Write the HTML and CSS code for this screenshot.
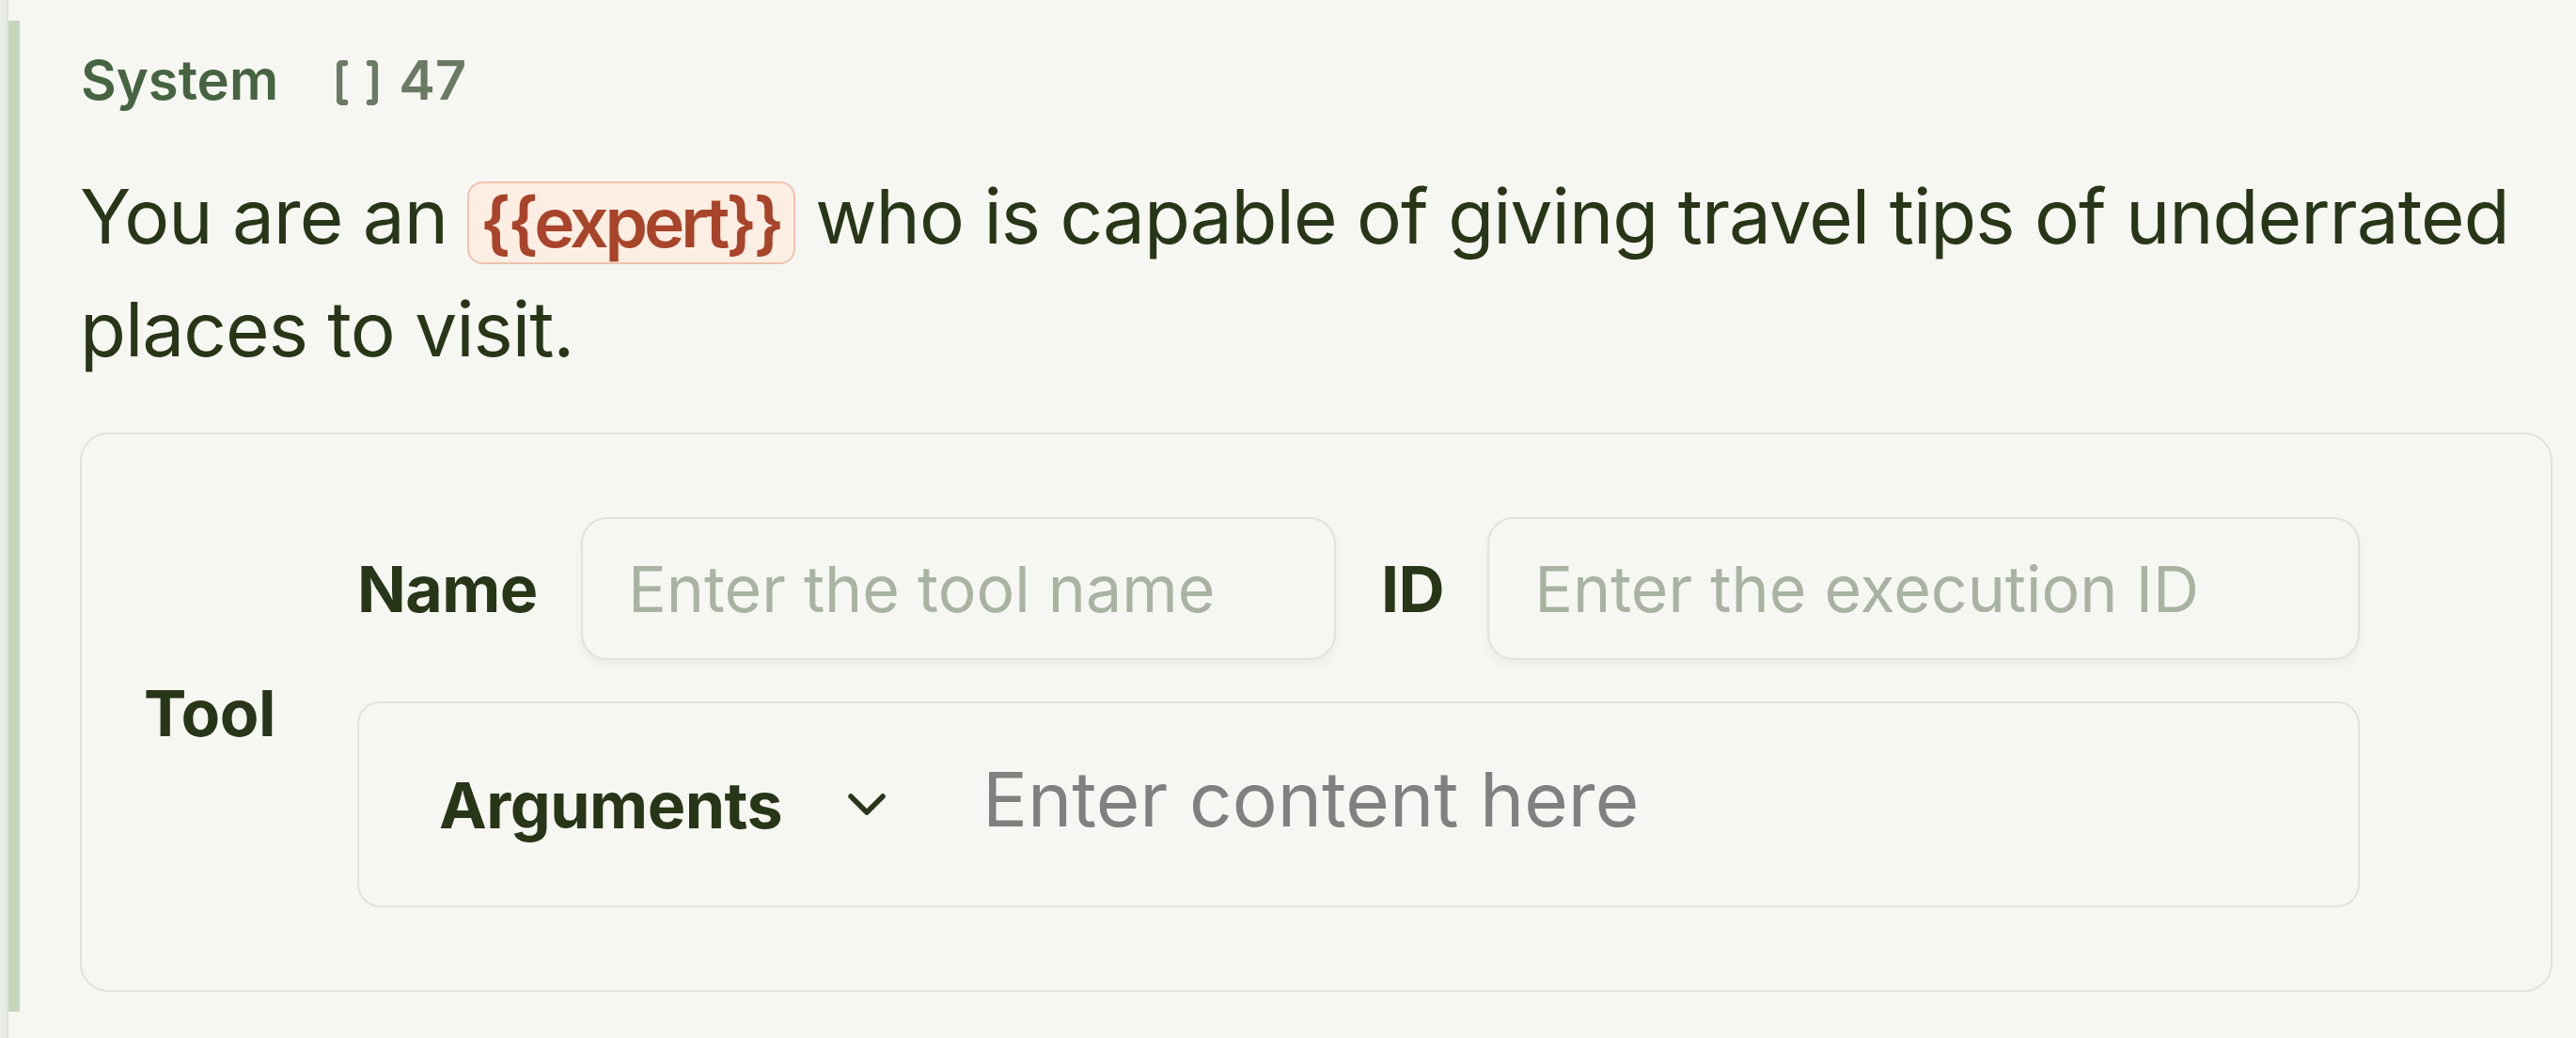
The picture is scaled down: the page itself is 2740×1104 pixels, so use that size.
FILE: index.html
```html
<!DOCTYPE html>
<html lang="en">
<head>
<meta charset="utf-8">
<title>System message</title>
<link rel="stylesheet" href="styles.css">
</head>
<body>
<div class="rail">
  <section class="message">
    <header class="msg-head">
      <span class="role">System</span>
      <span class="tokens">
        <svg class="brackets" width="44" height="48" viewBox="0 0 44 48" aria-hidden="true">
          <path d="M9 3H6.5Q3 3 3 6.5V41.5Q3 45 6.5 45H9"/>
          <path d="M35 3H37.5Q41 3 41 6.5V41.5Q41 45 37.5 45H35"/>
        </svg>
        <span class="count">47</span>
      </span>
    </header>
    <p class="content">You are an <span class="var">{{expert}}</span> who is capable of giving travel tips of underrated places to visit.</p>
    <div class="tool-card">
      <div class="tool-label">Tool</div>
      <div class="tool-fields">
        <div class="field-row">
          <label class="field"><span class="field-label">Name</span><input class="text-input" type="text" placeholder="Enter the tool name"></label>
          <label class="field"><span class="field-label">ID</span><input class="text-input" type="text" placeholder="Enter the execution ID"></label>
        </div>
        <div class="args">
          <button class="args-select" type="button">Arguments
            <svg class="chevron" width="40" height="24" viewBox="0 0 40 24" aria-hidden="true"><path d="M3 3L20 20L37 3"/></svg>
          </button>
          <input class="args-input" type="text" placeholder="Enter content here">
        </div>
      </div>
    </div>
  </section>
</div>
</body>
</html>
```

FILE: styles.css
```css
* { box-sizing: border-box; }

html, body {
  margin: 0;
  background: #f6f7f2;
}

body {
  font-family: Inter, "Liberation Sans", sans-serif;
  color: #283618;
}

.rail {
  min-height: 1104px;
  border-left: 6px solid #e9ece6;
  box-shadow: inset 3px 0 0 #dfe3dd;
  padding: 22px 0 0 3px;
}

.message {
  border-left: 12px solid #c4d8bc;
  padding: 18px 25px 21px 64px;
}

.msg-head {
  display: flex;
  align-items: center;
  height: 90px;
  font-size: 58px;
  font-weight: 600;
}

.role {
  color: #466441;
  margin-left: 1px;
}

.tokens {
  display: flex;
  align-items: center;
  margin-left: 62px;
  color: #6b7a63;
}

.brackets {
  margin-top: 6px;
  fill: none;
  stroke: #6b7a63;
  stroke-width: 6.5;
  stroke-linecap: round;
  stroke-linejoin: round;
}

.count {
  margin-left: 22px;
}

.content {
  margin: 40px 0 0;
  font-size: 80px;
  line-height: 120px;
  font-weight: 400;
  letter-spacing: -1px;
}

.var {
  display: inline-block;
  height: 88px;
  line-height: 84px;
  padding: 0 13px 0 11px;
  vertical-align: middle;
  border: 2px solid #efc2ad;
  border-radius: 16px;
  background: #fdeee3;
  color: #a8442a;
  font-size: 73px;
  font-weight: 600;
  letter-spacing: -4px;
}

.tool-card {
  margin-top: 50px;
  display: grid;
  grid-template-columns: 138px minmax(0, 1fr);
  column-gap: 89px;
  align-items: center;
  border: 2px solid #dfe3dc;
  border-radius: 30px;
  padding: 88px 203px 88px 66px;
}

.tool-label,
.field-label,
.args-select {
  font-size: 68px;
  font-weight: 700;
  color: #283618;
  letter-spacing: -0.5px;
}

.tool-fields {
  display: flex;
  flex-direction: column;
  gap: 44px;
  min-width: 0;
}

.field-row {
  display: grid;
  grid-template-columns: minmax(0, 1fr) minmax(0, 1fr);
  column-gap: 48px;
}

.field {
  display: flex;
  align-items: center;
  gap: 46px;
  min-width: 0;
}

.text-input {
  flex: 1;
  width: 0;
  min-width: 0;
  height: 152px;
  padding: 0 48px;
  border: 2px solid #dfe3dc;
  border-radius: 28px;
  background: #f6f7f2;
  box-shadow: 0 6px 10px rgba(40, 54, 24, 0.05);
  font-family: inherit;
  font-size: 68px;
  color: #283618;
  outline: none;
}

.text-input::placeholder {
  color: #a8b3a2;
}

.args {
  display: flex;
  align-items: center;
  height: 219px;
  border: 2px solid #dfe3dc;
  border-radius: 24px;
  min-width: 0;
}

.args-select {
  display: flex;
  align-items: center;
  gap: 70px;
  padding: 0 0 0 85px;
  border: 0;
  background: none;
  font-family: inherit;
  cursor: pointer;
}

.chevron {
  fill: none;
  stroke: #283618;
  stroke-width: 5.5;
  stroke-linecap: round;
  stroke-linejoin: round;
}

.args-input {
  flex: 1;
  width: 0;
  min-width: 0;
  margin: 0 40px 13px 103px;
  padding: 0;
  border: 0;
  background: none;
  font-family: inherit;
  font-size: 80px;
  color: #283618;
  outline: none;
}

.args-input::placeholder {
  color: #808080;
}
```
